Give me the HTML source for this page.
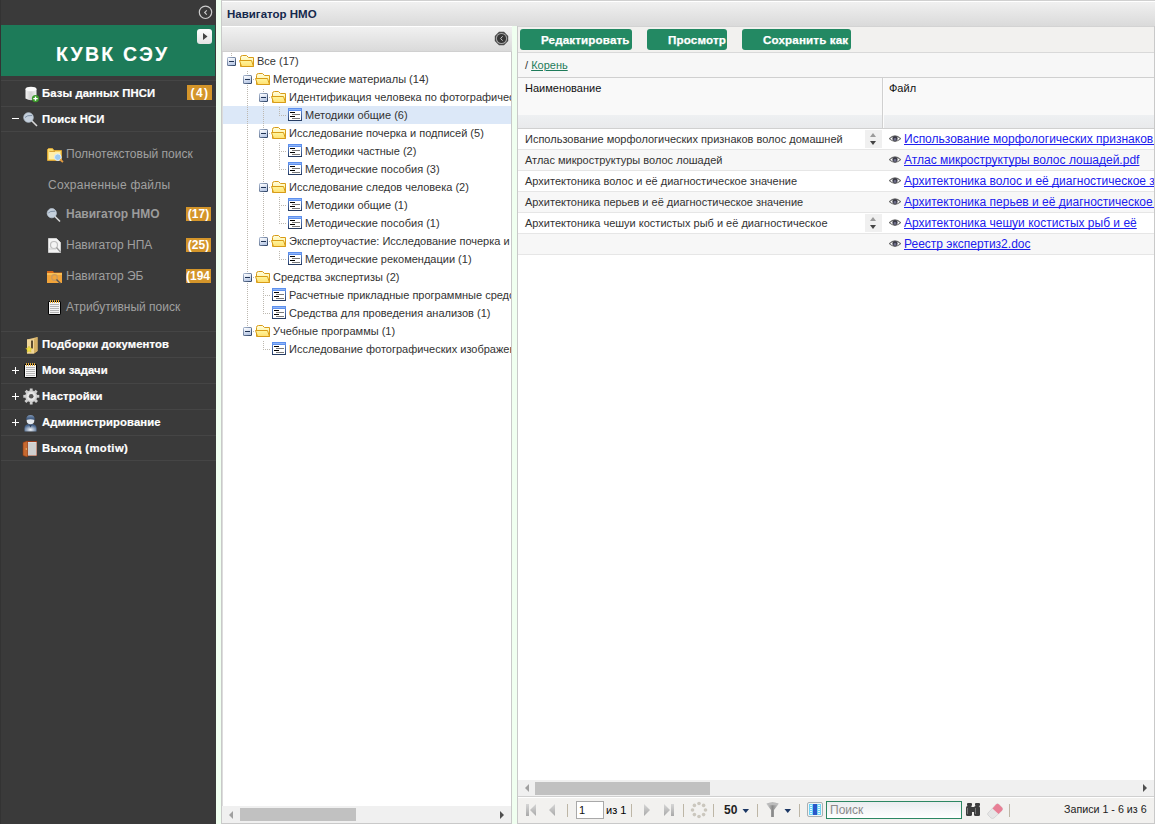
<!DOCTYPE html>
<html><head><meta charset="utf-8">
<style>
*{box-sizing:border-box;margin:0;padding:0}
html,body{width:1155px;height:824px;overflow:hidden;background:#f0fff0;font-family:"Liberation Sans",sans-serif;font-size:11px;color:#000}
.a{position:absolute}
#sb{left:0;top:0;width:216px;height:824px;background:#3a3a3a}
.row{position:absolute;left:1px;width:215px;border-top:1px solid #454545}
.bt{color:#fff;font-weight:bold;font-size:11.3px;position:absolute;white-space:nowrap;-webkit-text-stroke:0.2px #fff;letter-spacing:0.1px}
.st{color:#a0a0a0;font-size:12px;position:absolute;white-space:nowrap}
.badge{position:absolute;background:#d4952a;color:#fff;font-weight:bold;font-size:12px;line-height:15px;height:14px;text-align:center;overflow:hidden;white-space:nowrap}
.pm{position:absolute;color:#fff;font-size:14px;line-height:14px}
.tn{position:absolute;white-space:nowrap;font-size:11px;color:#333;line-height:18px;height:18px}
.grad1{background:linear-gradient(#f1f1f1,#dadada)}
.btn{position:absolute;top:29px;height:21px;background:#238963;border-radius:3px;color:#fff;font-weight:bold;font-size:11.6px;line-height:22px;letter-spacing:0.15px;-webkit-text-stroke:0.25px #fff;white-space:nowrap}
.gr{position:absolute;left:518px;width:637px;height:21px;border-bottom:1px solid #e6e6e6;font-size:11px;line-height:20px;white-space:nowrap;overflow:hidden}
.gr .c1{position:absolute;left:7px;top:0;color:#333}
.gr .c2{position:absolute;left:386px;top:0;color:#2020ee;font-size:12px;text-decoration:underline;text-decoration-skip-ink:none}
.eye{position:absolute;left:371px;top:6px;width:12px;height:8px}
.spin{position:absolute;left:347px;top:1px;width:17px;height:18px;background:#f0f0f0}
.spin:before{content:"";position:absolute;left:5px;top:3px;border-left:3.5px solid transparent;border-right:3.5px solid transparent;border-bottom:4px solid #9a9a9a}
.spin:after{content:"";position:absolute;left:5px;top:11px;border-left:3.5px solid transparent;border-right:3.5px solid transparent;border-top:4px solid #444}
</style></head><body>
<svg width="0" height="0" style="position:absolute"><defs>
<linearGradient id="gbo" x1="0" y1="0" x2="1" y2="1"><stop offset="0" stop-color="#b4c2da"/><stop offset="1" stop-color="#1f3558"/></linearGradient>
<linearGradient id="gbi" x1="0" y1="0" x2="0.3" y2="1"><stop offset="0" stop-color="#fff"/><stop offset="1" stop-color="#bccbe6"/></linearGradient>
<linearGradient id="gfy" x1="0" y1="0" x2="0" y2="1"><stop offset="0" stop-color="#fff7a0"/><stop offset="1" stop-color="#ffe070"/></linearGradient>
<linearGradient id="gfb" x1="0" y1="0" x2="0" y2="1"><stop offset="0" stop-color="#fffde0"/><stop offset="1" stop-color="#fff080"/></linearGradient>
<linearGradient id="gdl" x1="0" y1="0" x2="0" y2="1"><stop offset="0" stop-color="#6a9af0"/><stop offset="1" stop-color="#24395e"/></linearGradient>
<g id="ibox"><rect x="0" y="0" width="9" height="9" rx="1.5" fill="url(#gbo)"/><rect x="1" y="1" width="7" height="7" fill="url(#gbi)"/><rect x="2" y="4" width="5" height="1" fill="#1f3354"/></g>
<g id="ifold"><path d="M1.5 11.5V2.5Q1.5 0.5 3.5 0.5H7.5L9.5 2.5H14.5V11.5Z" fill="url(#gfb)" stroke="#d89c18"/><path d="M0.5 5.5H12.5L14.5 11.5H2.5Z" fill="url(#gfy)" stroke="#d89c18"/></g>
<g id="idoc"><rect x="0" y="0" width="14" height="13" fill="url(#gdl)"/><rect x="0" y="0" width="14" height="3" fill="#5d90ee"/><rect x="1" y="1" width="12" height="1" fill="#8fb5f8"/><rect x="1" y="3" width="12" height="9" fill="#fff"/><rect x="2" y="4" width="5" height="1" fill="#000"/><rect x="4" y="6" width="8" height="1" fill="#7a7a7a"/><rect x="2" y="8" width="5" height="1" fill="#000"/><rect x="4" y="10" width="8" height="1" fill="#7a7a7a"/></g>
<g id="ieye"><path d="M0.3 3.6Q6 -1.8 11.7 3.6Q6 9 0.3 3.6Z" fill="#fff" stroke="#6a6a6a" stroke-width="1.1"/><circle cx="6" cy="3.6" r="2.6" fill="#3b3b46"/><circle cx="6" cy="4.4" r="1.3" fill="#6e6e8a"/></g>
<g id="inote"><rect x="0" y="1" width="13" height="14" rx="2" fill="#000"/><rect x="1" y="2" width="11" height="12" fill="#f4f4f4"/><g fill="#b4b4b4"><rect x="2" y="4" width="9" height="1"/><rect x="2" y="6" width="9" height="1"/><rect x="2" y="8" width="9" height="1"/><rect x="2" y="10" width="9" height="1"/><rect x="2" y="12" width="9" height="1"/></g><g fill="#e0a83a"><rect x="2" y="0" width="1" height="3"/><rect x="4" y="0" width="1" height="3"/><rect x="6" y="0" width="1" height="3"/><rect x="8" y="0" width="1" height="3"/><rect x="10" y="0" width="1" height="3"/></g></g>
</defs></svg>
<!-- SIDEBAR -->
<div id="sb" class="a">
  <div class="a" style="left:0;top:0;width:1px;height:824px;background:#333"></div>
  <svg class="a" style="left:197px;top:5px" width="16" height="16" viewBox="0 0 16 16"><circle cx="8.5" cy="7.3" r="6.2" fill="none" stroke="#cdcdcd" stroke-width="1.2"/><path d="M9.8 5.3 L7.6 7.5 L9.8 9.7" fill="none" stroke="#cdcdcd" stroke-width="1.1"/></svg>
  <div class="a" style="left:1px;top:25px;width:214px;height:51px;background:#1d7b59"></div>
  <div class="a" style="left:56px;top:41px;color:#fff;font-weight:bold;font-size:19.5px;letter-spacing:2.2px;-webkit-text-stroke:0.1px #fff;white-space:nowrap;line-height:26px">КУВК СЭУ</div>
  <div class="a" style="left:197px;top:29px;width:15px;height:15px;background:linear-gradient(#fff,#e4e4e4);border-radius:3px"></div>
  <svg class="a" style="left:197px;top:29px" width="15" height="15"><path d="M6 4 L10.5 7.5 L6 11 Z" fill="#444"/></svg>

  <div class="row" style="top:80px;height:26px"></div>
  <div class="bt" style="left:42px;top:87px">Базы данных ПНСИ</div>
  <div class="badge" style="left:187px;top:85px;width:25px;height:15px;line-height:16px;letter-spacing:1.5px;padding-left:1px">(4)</div>
  <div class="row" style="top:106px;height:25px"></div>
  <div class="bt" style="left:42px;top:113px">Поиск НСИ</div>
  <div class="row" style="top:131px;height:200px"></div>
  <div class="st" style="left:66px;top:147px">Полнотекстовый поиск</div>
  <div class="st" style="left:48px;top:178px;letter-spacing:0.22px">Сохраненные файлы</div>
  <div class="st" style="left:66px;top:207px;font-weight:bold;color:#9c9c9c;font-size:12px;top:207px">Навигатор НМО</div>
  <div class="badge" style="left:186px;top:207px;width:25px">(17)</div>
  <div class="st" style="left:66px;top:238px">Навигатор НПА</div>
  <div class="badge" style="left:186px;top:238px;width:25px">(25)</div>
  <div class="st" style="left:66px;top:269px">Навигатор ЭБ</div>
  <div class="badge" style="left:186px;top:269px;width:25px;text-align:left">(194</div>
  <div class="st" style="left:66px;top:300px">Атрибутивный поиск</div>

  <div class="row" style="top:331px;height:26px"></div>
  <div class="bt" style="left:42px;top:338px">Подборки документов</div>
  <div class="row" style="top:357px;height:26px"></div>
  <div class="bt" style="left:42px;top:364px">Мои задачи</div>
  <div class="row" style="top:383px;height:26px"></div>
  <div class="bt" style="left:42px;top:390px">Настройки</div>
  <div class="row" style="top:409px;height:26px"></div>
  <div class="bt" style="left:42px;top:416px">Администрирование</div>
  <div class="row" style="top:435px;height:25px"></div>
  <div class="bt" style="left:42px;top:442px;letter-spacing:0.4px">Выход (motiw)</div>
  <div class="row" style="top:460px;height:1px"></div>
<svg class="a" style="left:24px;top:86px" width="18" height="17" viewBox="0 0 18 17"><defs><linearGradient id="gdb" x1="0" x2="1"><stop offset="0" stop-color="#f4f4f4"/><stop offset="0.5" stop-color="#d0d0d0"/><stop offset="1" stop-color="#f0f0f0"/></linearGradient></defs><path d="M1.5 3V12.5Q7 16 12.5 12.5V3Z" fill="url(#gdb)"/><ellipse cx="7" cy="3" rx="5.5" ry="2.3" fill="#fafafa"/><circle cx="11.5" cy="12.6" r="3.6" fill="#3c9a2a"/><path d="M11.5 10.4V14.8M9.3 12.6H13.7" stroke="#fff" stroke-width="1.4"/></svg>
<svg class="a" style="left:23px;top:111px" width="16" height="17" viewBox="0 0 16 17"><path d="M8.5 9.5L14 15" stroke="#d8d8d8" stroke-width="1.6"/><circle cx="5.5" cy="6.5" r="4.8" fill="#c5d0dc" stroke="#b8c4d0" stroke-width="0.8"/><path d="M2 6.5Q4 4 9 4.5" stroke="#7e8fa4" stroke-width="1" fill="none"/></svg>
<svg class="a" style="left:47px;top:147px" width="18" height="16" viewBox="0 0 18 16"><path d="M0.5 2.5V13.5H14.5V3.5H7L5.5 1.5H1.5Z" fill="#f7d86a" stroke="#d9a436"/><rect x="2" y="5" width="11" height="7" fill="#ffefaa"/><path d="M2.5 4.5H8" stroke="#d9a436"/><circle cx="10.8" cy="10.2" r="3.3" fill="#9ccaf0" stroke="#dfeefa" stroke-width="1"/><path d="M13 12.5L16 15" stroke="#e09a40" stroke-width="1.8"/></svg>
<svg class="a" style="left:46px;top:207px" width="16" height="16" viewBox="0 0 16 16"><path d="M8.5 9L14 14.5" stroke="#d8d8d8" stroke-width="1.6"/><circle cx="5.8" cy="6.2" r="4.6" fill="#c5d0dc" stroke="#b8c4d0" stroke-width="0.8"/><path d="M2.3 6Q4 3.8 9 4.2" stroke="#7e8fa4" stroke-width="1" fill="none"/></svg>
<svg class="a" style="left:48px;top:238px" width="14" height="16" viewBox="0 0 14 16"><path d="M0.5 0.5H8.5L12.5 4.5V14.5H0.5Z" fill="#f4f4f4" stroke="#d0d0d0"/><circle cx="6" cy="7" r="3.5" fill="none" stroke="#bdbdbd" stroke-width="1.2"/><path d="M8.5 9.5L12.5 14" stroke="#999" stroke-width="1.3"/><path d="M1 11H8" stroke="#ccc"/></svg>
<svg class="a" style="left:47px;top:270px" width="17" height="15" viewBox="0 0 17 15"><path d="M0 1H6L7 2.5H15V12.5H0Z" fill="#d46a1a"/><rect x="0" y="3" width="15" height="10" fill="#f2a43a"/><rect x="0" y="3" width="15" height="2" fill="#f8bf55"/><circle cx="7.5" cy="7.5" r="2.8" fill="none" stroke="#c79a60" stroke-width="1.2"/><path d="M9.5 9.5L13.5 13.5" stroke="#555" stroke-width="1.5"/></svg>
<svg class="a" style="left:48px;top:300px" width="14" height="16"><use href="#inote"/></svg>
<svg class="a" style="left:25px;top:337px" width="14" height="17" viewBox="0 0 14 17"><path d="M2 2.5L12.5 0V14L9 16.5H2Z" fill="#e2c07a"/><path d="M2 2.5H9V16.5H2Z" fill="#f0d69a"/><path d="M9 2.5L12.5 0V14L9 16.5Z" fill="#d4ae62"/><rect x="6" y="3.5" width="2" height="8" fill="#5a4a30"/><path d="M4 9L5 11.2L7.3 11.4L5.6 12.9L6.1 15.2L4 14L1.9 15.2L2.4 12.9L0.7 11.4L3 11.2Z" fill="#f0e040" stroke="#c8b020" stroke-width="0.4"/></svg>
<svg class="a" style="left:24px;top:363px" width="14" height="16"><use href="#inote"/></svg>
<svg class="a" style="left:23px;top:388px" width="17" height="17" viewBox="0 0 17 17"><g fill="#cfcfcf"><circle cx="8.2" cy="8.3" r="6"/><rect x="6.8" y="0.5" width="2.8" height="16"/><rect x="0.3" y="6.9" width="16" height="2.8"/><rect x="6.8" y="0.5" width="2.8" height="16" transform="rotate(45 8.2 8.3)"/><rect x="6.8" y="0.5" width="2.8" height="16" transform="rotate(-45 8.2 8.3)"/></g><circle cx="8.2" cy="8.3" r="4.5" fill="#e6e6e6"/><circle cx="8.2" cy="8.3" r="2.3" fill="#555"/></svg>
<svg class="a" style="left:24px;top:414px" width="14" height="18" viewBox="0 0 14 18"><defs><radialGradient id="gad" cx="0.5" cy="0.75" r="0.6"><stop offset="0" stop-color="#f2f5f8"/><stop offset="1" stop-color="#48658c"/></radialGradient><linearGradient id="gcap" x1="0" y1="0" x2="0" y2="1"><stop offset="0" stop-color="#7d95b5"/><stop offset="1" stop-color="#2f4a70"/></linearGradient></defs><path d="M0.5 17.5V14Q0.5 10 6.5 10Q12.5 10 12.5 14V17.5Z" fill="url(#gad)"/><path d="M5 10.5L6.5 13.5L8 10.5Z" fill="#2d3f58"/><circle cx="6.5" cy="6.5" r="3.8" fill="#e6eaee"/><path d="M2.2 6Q2.2 1 6.5 1Q10.8 1 10.8 6Q6.5 4.5 2.2 6Z" fill="url(#gcap)"/></svg>
<svg class="a" style="left:22px;top:440px" width="17" height="18" viewBox="0 0 17 18"><rect x="4" y="1" width="11" height="15" fill="#9a3a1a"/><rect x="5.5" y="2" width="9" height="13.5" fill="#e6e6e6"/><rect x="6" y="2.5" width="8" height="12.5" fill="#cfcfcf"/><path d="M1 2.5L5.5 1V17L1 15.5Z" fill="#c7692f" stroke="#8f3a10" stroke-width="0.6"/><circle cx="4.3" cy="9" r="0.7" fill="#f0d080"/></svg>
<div class="a" style="left:12px;top:118px;width:7px;height:1px;background:#fff"></div>
<div class="a" style="left:12px;top:370px;width:7px;height:1px;background:#fff"></div><div class="a" style="left:15px;top:367px;width:1px;height:7px;background:#fff"></div>
<div class="a" style="left:12px;top:396px;width:7px;height:1px;background:#fff"></div><div class="a" style="left:15px;top:393px;width:1px;height:7px;background:#fff"></div>
<div class="a" style="left:12px;top:422px;width:7px;height:1px;background:#fff"></div><div class="a" style="left:15px;top:419px;width:1px;height:7px;background:#fff"></div>
</div>

<!-- MAIN PANEL -->
<div class="a grad1" style="left:221px;top:0;width:934px;height:26px;border-left:1px solid #c9c9c9;border-top:1px solid #d0d0d0;box-shadow:inset 0 1px 0 #fff"></div>
<div class="a" style="left:227px;top:8px;font-weight:bold;font-size:11.5px;color:#15294d;white-space:nowrap">Навигатор НМО</div>

<!-- TREE PANEL -->
<div class="a" style="left:221px;top:26px;width:291px;height:798px;background:#fff;border-left:1px solid #c9c9c9;border-right:1px solid #c9c9c9;box-shadow:inset 1px 0 0 #dcdcdc"></div>
<div class="a grad1" style="left:222px;top:26px;width:290px;height:26px;border-top:1px solid #fff;border-bottom:1px solid #d0d0d0"></div>
<svg class="a" style="left:494px;top:31px" width="15" height="15"><path d="M5 0.8H10L14.2 5V10L10 14.2H5L0.8 10V5Z" fill="#4a4a4a"/><circle cx="7.5" cy="7.5" r="5.6" fill="#a9a9a9"/><circle cx="7.5" cy="7.5" r="4.6" fill="#363636"/><path d="M8.6 5.3 L6.7 7.5 L8.6 9.7" fill="none" stroke="#c8c8c8" stroke-width="1"/></svg>
<div id="tree" class="a" style="left:222px;top:52px;width:289px;height:754px;overflow:hidden">
  <div class="a" style="left:1px;top:54px;width:288px;height:18px;background:#dce8f8"></div>
<svg class="a" style="left:0;top:0" width="289" height="360"><g stroke="#bdb8b0" stroke-width="1" stroke-dasharray="1 1" stroke-dashoffset="1" fill="none"><line x1="9.5" y1="0" x2="9.5" y2="6"/><line x1="25.5" y1="18" x2="25.5" y2="36"/><line x1="25.5" y1="36" x2="25.5" y2="54"/><line x1="41.5" y1="36" x2="41.5" y2="54"/><line x1="25.5" y1="54" x2="25.5" y2="72"/><line x1="41.5" y1="54" x2="41.5" y2="72"/><line x1="57.5" y1="54" x2="57.5" y2="63"/><line x1="25.5" y1="72" x2="25.5" y2="90"/><line x1="41.5" y1="72" x2="41.5" y2="90"/><line x1="25.5" y1="90" x2="25.5" y2="108"/><line x1="41.5" y1="90" x2="41.5" y2="108"/><line x1="57.5" y1="90" x2="57.5" y2="108"/><line x1="25.5" y1="108" x2="25.5" y2="126"/><line x1="41.5" y1="108" x2="41.5" y2="126"/><line x1="57.5" y1="108" x2="57.5" y2="117"/><line x1="25.5" y1="126" x2="25.5" y2="144"/><line x1="41.5" y1="126" x2="41.5" y2="144"/><line x1="25.5" y1="144" x2="25.5" y2="162"/><line x1="41.5" y1="144" x2="41.5" y2="162"/><line x1="57.5" y1="144" x2="57.5" y2="162"/><line x1="25.5" y1="162" x2="25.5" y2="180"/><line x1="41.5" y1="162" x2="41.5" y2="180"/><line x1="57.5" y1="162" x2="57.5" y2="171"/><line x1="25.5" y1="180" x2="25.5" y2="198"/><line x1="41.5" y1="180" x2="41.5" y2="189"/><line x1="25.5" y1="198" x2="25.5" y2="216"/><line x1="57.5" y1="198" x2="57.5" y2="207"/><line x1="25.5" y1="216" x2="25.5" y2="234"/><line x1="25.5" y1="234" x2="25.5" y2="252"/><line x1="41.5" y1="234" x2="41.5" y2="252"/><line x1="25.5" y1="252" x2="25.5" y2="270"/><line x1="41.5" y1="252" x2="41.5" y2="261"/><line x1="25.5" y1="270" x2="25.5" y2="279"/><line x1="41.5" y1="288" x2="41.5" y2="297"/></g><g stroke="#bdb8b0" stroke-width="1" stroke-dasharray="1 1" fill="none"><line x1="25" y1="27.5" x2="33" y2="27.5"/><line x1="41" y1="45.5" x2="49" y2="45.5"/><line x1="57" y1="63.5" x2="65" y2="63.5"/><line x1="41" y1="81.5" x2="49" y2="81.5"/><line x1="57" y1="99.5" x2="65" y2="99.5"/><line x1="57" y1="117.5" x2="65" y2="117.5"/><line x1="41" y1="135.5" x2="49" y2="135.5"/><line x1="57" y1="153.5" x2="65" y2="153.5"/><line x1="57" y1="171.5" x2="65" y2="171.5"/><line x1="41" y1="189.5" x2="49" y2="189.5"/><line x1="57" y1="207.5" x2="65" y2="207.5"/><line x1="25" y1="225.5" x2="33" y2="225.5"/><line x1="41" y1="243.5" x2="49" y2="243.5"/><line x1="41" y1="261.5" x2="49" y2="261.5"/><line x1="25" y1="279.5" x2="33" y2="279.5"/><line x1="41" y1="297.5" x2="49" y2="297.5"/></g></svg>
<svg class="a box" style="left:5px;top:5px" width="9" height="9"><use href="#ibox"/></svg>
<svg class="a" style="left:17px;top:3px" width="16" height="13"><use href="#ifold"/></svg>
<div class="tn" style="left:35px;top:0px">Все (17)</div>
<svg class="a box" style="left:21px;top:23px" width="9" height="9"><use href="#ibox"/></svg>
<svg class="a" style="left:33px;top:21px" width="16" height="13"><use href="#ifold"/></svg>
<div class="tn" style="left:51px;top:18px">Методические материалы (14)</div>
<svg class="a box" style="left:37px;top:41px" width="9" height="9"><use href="#ibox"/></svg>
<svg class="a" style="left:49px;top:39px" width="16" height="13"><use href="#ifold"/></svg>
<div class="tn" style="left:67px;top:36px">Идентификация человека по фотографическим изображениям (1)</div>
<svg class="a" style="left:66px;top:56px" width="14" height="13"><use href="#idoc"/></svg>
<div class="tn" style="left:83px;top:54px">Методики общие (6)</div>
<svg class="a box" style="left:37px;top:77px" width="9" height="9"><use href="#ibox"/></svg>
<svg class="a" style="left:49px;top:75px" width="16" height="13"><use href="#ifold"/></svg>
<div class="tn" style="left:67px;top:72px">Исследование почерка и подписей (5)</div>
<svg class="a" style="left:66px;top:92px" width="14" height="13"><use href="#idoc"/></svg>
<div class="tn" style="left:83px;top:90px">Методики частные (2)</div>
<svg class="a" style="left:66px;top:110px" width="14" height="13"><use href="#idoc"/></svg>
<div class="tn" style="left:83px;top:108px">Методические пособия (3)</div>
<svg class="a box" style="left:37px;top:131px" width="9" height="9"><use href="#ibox"/></svg>
<svg class="a" style="left:49px;top:129px" width="16" height="13"><use href="#ifold"/></svg>
<div class="tn" style="left:67px;top:126px">Исследование следов человека (2)</div>
<svg class="a" style="left:66px;top:146px" width="14" height="13"><use href="#idoc"/></svg>
<div class="tn" style="left:83px;top:144px">Методики общие (1)</div>
<svg class="a" style="left:66px;top:164px" width="14" height="13"><use href="#idoc"/></svg>
<div class="tn" style="left:83px;top:162px">Методические пособия (1)</div>
<svg class="a box" style="left:37px;top:185px" width="9" height="9"><use href="#ibox"/></svg>
<svg class="a" style="left:49px;top:183px" width="16" height="13"><use href="#ifold"/></svg>
<div class="tn" style="left:67px;top:180px">Экспертоучастие: Исследование почерка и подписей (1)</div>
<svg class="a" style="left:66px;top:200px" width="14" height="13"><use href="#idoc"/></svg>
<div class="tn" style="left:83px;top:198px">Методические рекомендации (1)</div>
<svg class="a box" style="left:21px;top:221px" width="9" height="9"><use href="#ibox"/></svg>
<svg class="a" style="left:33px;top:219px" width="16" height="13"><use href="#ifold"/></svg>
<div class="tn" style="left:51px;top:216px">Средства экспертизы (2)</div>
<svg class="a" style="left:50px;top:236px" width="14" height="13"><use href="#idoc"/></svg>
<div class="tn" style="left:67px;top:234px">Расчетные прикладные программные средства (1)</div>
<svg class="a" style="left:50px;top:254px" width="14" height="13"><use href="#idoc"/></svg>
<div class="tn" style="left:67px;top:252px">Средства для проведения анализов (1)</div>
<svg class="a box" style="left:21px;top:275px" width="9" height="9"><use href="#ibox"/></svg>
<svg class="a" style="left:33px;top:273px" width="16" height="13"><use href="#ifold"/></svg>
<div class="tn" style="left:51px;top:270px">Учебные программы (1)</div>
<svg class="a" style="left:50px;top:290px" width="14" height="13"><use href="#idoc"/></svg>
<div class="tn" style="left:67px;top:288px">Исследование фотографических изображений (1)</div>

</div>
<div class="a" style="left:222px;top:806px;width:289px;height:18px;background:#f0f0f0"></div>
<div class="a" style="left:240px;top:808px;width:116px;height:13px;background:#c1c1c1"></div><div class="a" style="left:221px;top:823px;width:291px;height:1px;background:#c9c9c9"></div>
<svg class="a" style="left:226px;top:809px" width="10" height="12"><path d="M7 2 L3 6 L7 10Z" fill="#a0a0a0"/></svg>
<svg class="a" style="left:497px;top:809px" width="10" height="12"><path d="M3 2 L7 6 L3 10Z" fill="#505050"/></svg>

<!-- RIGHT PANEL -->
<div class="a" style="left:517px;top:26px;width:638px;height:798px;background:#fff;border-left:1px solid #c9c9c9"></div>
<div class="a" style="left:518px;top:26px;width:637px;height:27px;background:#f2f1ef;border-top:1px solid #d3d3d3;border-bottom:1px solid #d9d9d9"></div>
<div class="btn" style="left:520px;width:112px"><span class="a" style="left:21px">Редактировать</span></div>
<div class="btn" style="left:647px;width:80px"><span class="a" style="left:21px">Просмотр</span></div>
<div class="btn" style="left:742px;width:109px"><span class="a" style="left:21px">Сохранить как</span></div>
<div class="a" style="left:518px;top:53px;width:637px;height:25px;background:#f7f7f7;border-bottom:1px solid #d0d0d0"></div>
<div class="a" style="left:525px;top:59px;white-space:nowrap;font-size:11px;color:#333">/ <span style="color:#1e7b5a;text-decoration:underline">Корень</span></div>
<!-- grid header -->
<div class="a" style="left:518px;top:78px;width:637px;height:51px;background:linear-gradient(#f9f9f9 0,#f9f9f9 37px,#eef0f2 37px,#e9eaec 50px);border-bottom:1px solid #d0d0d0"></div>
<div class="a" style="left:882px;top:78px;width:1px;height:50px;background:#d0d0d0"></div><div class="a" style="left:883px;top:78px;width:1px;height:50px;background:#fcfcfc"></div>
<div class="a" style="left:525px;top:82px;font-size:11px;color:#111">Наименование</div>
<div class="a" style="left:889px;top:82px;font-size:11px;color:#111">Файл</div>
<!-- rows -->
<div class="gr" style="top:129px;background:#fff"><span class="c1">Использование морфологических признаков волос домашней</span><div class="spin"></div><svg class="eye" width="12" height="8" viewBox="0 0 12 8"><use href="#ieye"/></svg><span class="c2">Использование морфологических признаков волос домашней</span></div>
<div class="gr" style="top:150px;background:#f7f7f7"><span class="c1">Атлас микроструктуры волос лошадей</span><svg class="eye" width="12" height="8" viewBox="0 0 12 8"><use href="#ieye"/></svg><span class="c2">Атлас микроструктуры волос лошадей.pdf</span></div>
<div class="gr" style="top:171px;background:#fff"><span class="c1">Архитектоника волос и её диагностическое значение</span><svg class="eye" width="12" height="8" viewBox="0 0 12 8"><use href="#ieye"/></svg><span class="c2">Архитектоника волос и её диагностическое значение</span></div>
<div class="gr" style="top:192px;background:#f7f7f7"><span class="c1">Архитектоника перьев и её диагностическое значение</span><svg class="eye" width="12" height="8" viewBox="0 0 12 8"><use href="#ieye"/></svg><span class="c2">Архитектоника перьев и её диагностическое значение</span></div>
<div class="gr" style="top:213px;background:#fff"><span class="c1">Архитектоника чешуи костистых рыб и её диагностическое</span><div class="spin"></div><svg class="eye" width="12" height="8" viewBox="0 0 12 8"><use href="#ieye"/></svg><span class="c2">Архитектоника чешуи костистых рыб и её</span></div>
<div class="gr" style="top:234px;background:#f7f7f7"><svg class="eye" width="12" height="8" viewBox="0 0 12 8"><use href="#ieye"/></svg><span class="c2">Реестр экспертиз2.doc</span></div>

<!-- h scrollbar -->
<div class="a" style="left:518px;top:780px;width:637px;height:17px;background:#f0f0f0;border-bottom:1px solid #d0d0d0"></div>
<div class="a" style="left:535px;top:782px;width:175px;height:13px;background:#c1c1c1"></div>
<svg class="a" style="left:522px;top:783px" width="10" height="12"><path d="M7 1 L3 5 L7 9Z" fill="#a0a0a0"/></svg>
<svg class="a" style="left:1140px;top:783px" width="10" height="12"><path d="M3 1 L7 5 L3 9Z" fill="#505050"/></svg>
<!-- pager -->
<div class="a" style="left:518px;top:798px;width:637px;height:26px;background:#f2f1ef;border-bottom:1px solid #c9c9c9"></div>
<div class="a" style="left:576px;top:801px;width:28px;height:18px;background:#fff;border:1px solid #a9a9a9;font-size:11px;line-height:16px;padding-left:2px;color:#111">1</div>
<div class="a" style="left:606px;top:804px;font-size:11px">из 1</div>
<div class="a" style="left:724px;top:803px;font-size:12px;font-weight:bold;color:#222;line-height:14px">50</div>
<svg class="a" style="left:518px;top:798px" width="637" height="25" viewBox="518 798 637 25">
<defs><linearGradient id="gpg" x1="0" y1="0" x2="0" y2="1"><stop offset="0" stop-color="#d6d6d6"/><stop offset="1" stop-color="#a9a9a9"/></linearGradient>
<linearGradient id="gfun" x1="0" y1="0" x2="1" y2="0"><stop offset="0" stop-color="#e0e0e0"/><stop offset="0.5" stop-color="#8a8a8a"/><stop offset="1" stop-color="#d0d0d0"/></linearGradient>
<linearGradient id="gsrch" x1="0" y1="0" x2="0" y2="1"><stop offset="0" stop-color="#e9ecef"/><stop offset="1" stop-color="#ffffff"/></linearGradient></defs>
<rect x="526" y="804" width="3" height="12" fill="url(#gpg)"/>
<path d="M536 804V816L530 810Z" fill="url(#gpg)"/>
<path d="M555 804V816L549 810Z" fill="url(#gpg)"/>
<rect x="567" y="804" width="1" height="13" fill="#bdb6a6"/>
<rect x="631" y="804" width="1" height="13" fill="#bdb6a6"/>
<path d="M644 804V816L650 810Z" fill="url(#gpg)"/>
<path d="M664 804V816L670 810Z" fill="url(#gpg)"/>
<rect x="671" y="804" width="3" height="12" fill="url(#gpg)"/>
<rect x="683" y="804" width="1" height="13" fill="#bdb6a6"/>
<g fill="#cbc7be"><circle cx="699" cy="803.5" r="1.8"/><circle cx="703.6" cy="805.4" r="1.8"/><circle cx="705.5" cy="810" r="1.8"/><circle cx="703.6" cy="814.6" r="1.8"/><circle cx="699" cy="816.5" r="1.8"/><circle cx="694.4" cy="814.6" r="1.8"/><circle cx="692.5" cy="810" r="1.8"/><circle cx="694.4" cy="805.4" r="1.8"/></g>
<rect x="713" y="804" width="1" height="13" fill="#bdb6a6"/>
<path d="M742.5 809H749L745.75 813Z" fill="#1b3764"/>
<rect x="757" y="804" width="1" height="13" fill="#bdb6a6"/>
<path d="M766 803.5Q772.5 801.5 779 803.5L774 810V817H771V810Z" fill="url(#gfun)"/>
<ellipse cx="772.5" cy="804" rx="5.5" ry="1.3" fill="#bcbcbc"/>
<path d="M784.5 809H791L787.75 813Z" fill="#1b3764"/>
<rect x="799" y="804" width="1" height="13" fill="#bdb6a6"/>
<rect x="807.5" y="802.5" width="15" height="14" rx="1.5" fill="#f4f4f4" stroke="#a8b0b4"/>
<rect x="809" y="804" width="12" height="11" fill="#6fd3f5"/>
<rect x="813" y="804" width="4" height="11" fill="#2a56c8"/>
<g fill="#e8f8ff"><rect x="810" y="805" width="2" height="1"/><rect x="810" y="807" width="2" height="1"/><rect x="810" y="809" width="2" height="1"/><rect x="810" y="811" width="2" height="1"/><rect x="810" y="813" width="2" height="1"/><rect x="818" y="805" width="2" height="1"/><rect x="818" y="807" width="2" height="1"/><rect x="818" y="809" width="2" height="1"/><rect x="818" y="811" width="2" height="1"/><rect x="818" y="813" width="2" height="1"/></g>
<rect x="826.5" y="801.5" width="135" height="17" fill="url(#gsrch)" stroke="#2d8763"/>
<g fill="#3d3d3d"><rect x="967" y="803" width="5" height="3" rx="1"/><rect x="975" y="803" width="5" height="3" rx="1"/><rect x="966" y="806" width="6" height="10" rx="1.5"/><rect x="974" y="806" width="6" height="10" rx="1.5"/><rect x="971" y="807" width="4" height="5"/></g>
<g fill="#777"><rect x="967" y="808" width="1" height="6"/><rect x="975" y="808" width="1" height="6"/></g>
<path d="M988 813L996 804.5Q997.5 803 999 804.5L1002 807.5Q1003.5 809 1002 810.5L994 818Q992.5 819 991 818L988 815Q987 814 988 813Z" fill="#e6e6e6" stroke="#c8c8c8" stroke-width="0.6"/>
<path d="M992.5 808.5L996 804.5Q997.5 803 999 804.5L1002 807.5Q1003.5 809 1002 810.5L998.5 814Z" fill="#e87f95"/>
<rect x="1009" y="804" width="1" height="13" fill="#bdb6a6"/>
</svg>
<div class="a" style="left:830px;top:803px;font-size:12px;line-height:14px;color:#8a8a8a">Поиск</div>
<div class="a" style="left:1064px;top:803px;font-size:10.7px;color:#222">Записи 1 - 6 из 6</div>
<div class="a" style="left:1154px;top:26px;width:1px;height:798px;background:#c9c9c9"></div>
</body></html>
